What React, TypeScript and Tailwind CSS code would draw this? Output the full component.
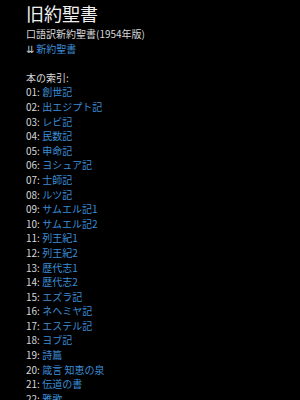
const books = [
  "創世記",
  "出エジプト記",
  "レビ記",
  "民数記",
  "申命記",
  "ヨシュア記",
  "士師記",
  "ルツ記",
  "サムエル記1",
  "サムエル記2",
  "列王紀1",
  "列王紀2",
  "歴代志1",
  "歴代志2",
  "エズラ記",
  "ネヘミヤ記",
  "エステル記",
  "ヨブ記",
  "詩篇",
  "箴言 知恵の泉",
  "伝道の書",
  "雅歌",
];

export default function App() {
  return (
    <div className="h-[400px] w-[300px] overflow-hidden bg-black px-[26px] pt-[1px] font-['Noto_Sans_CJK_JP',sans-serif] text-[10px] leading-[14.6px] text-[#d8d8d8]">
      <h1 className="mb-[2px] text-[18px] leading-[24px] font-normal text-[#f0f0f0]">旧約聖書</h1>
      <p>口語訳新約聖書(1954年版)</p>
      <p>
        <span className="text-[#cfcfcf]">⇊</span> <a className="text-[#3b8ed6]">新約聖書</a>
      </p>
      <br />
      <p>本の索引:</p>
      {books.map((b, i) => (
        <p key={b}>
          {String(i + 1).padStart(2, "0")}: <a className="text-[#3b8ed6]">{b}</a>
        </p>
      ))}
    </div>
  );
}
